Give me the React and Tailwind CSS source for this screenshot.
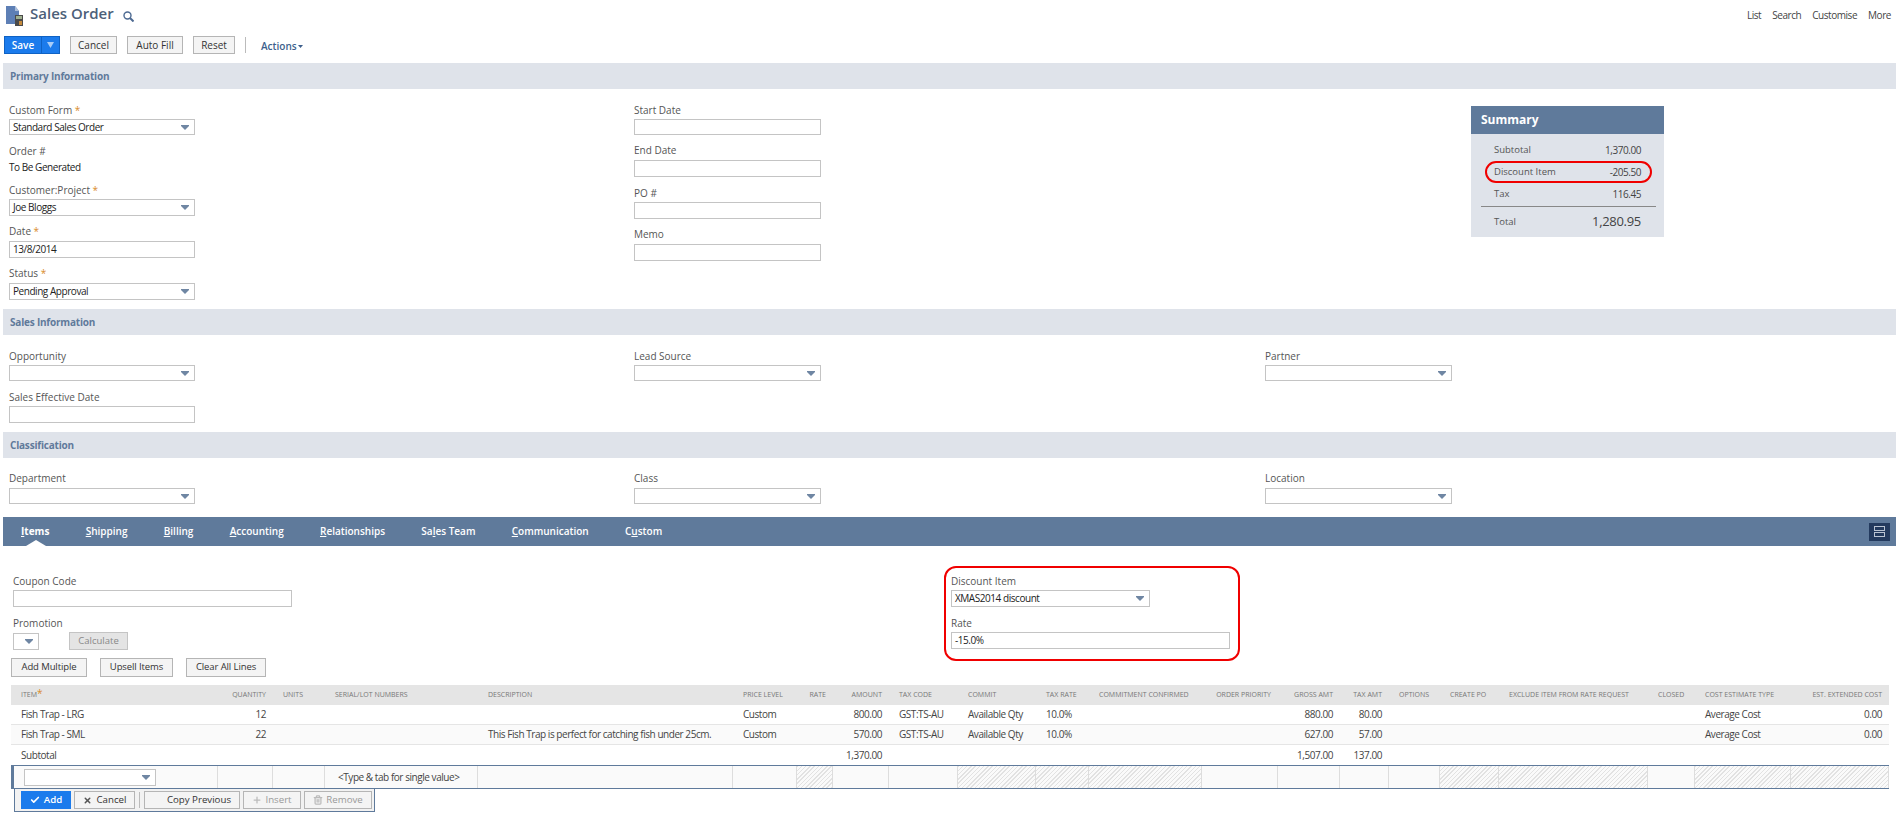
import { Check, X, Plus, Trash2 } from "lucide-react";

const gridCols =
  "grid grid-cols-[207px_55px_52px_153px_255px_64px_36px_56px_69px_78px_53px_113px_76px_62px_49px_51px_59px_149px_47px_96px_98px]";

const headers = [
  ["Item", "l"], ["Quantity", "r"], ["Units", "l"], ["Serial/Lot Numbers", "l"], ["Description", "l"],
  ["Price Level", "l"], ["Rate", "r"], ["Amount", "r"], ["Tax Code", "l"], ["Commit", "l"],
  ["Tax Rate", "l"], ["Commitment Confirmed", "l"], ["Order Priority", "r"], ["Gross Amt", "r"], ["Tax Amt", "r"],
  ["Options", "l"], ["Create PO", "l"], ["Exclude Item From Rate Request", "l"], ["Closed", "l"],
  ["Cost Estimate Type", "l"], ["Est. Extended Cost", "r"],
];

const rows = [
  {
    bg: "bg-white",
    cells: ["Fish Trap - LRG", "12", "", "", "", "Custom", "", "800.00", "GST:TS-AU", "Available Qty", "10.0%", "", "", "880.00", "80.00", "", "", "", "", "Average Cost", "0.00"],
  },
  {
    bg: "bg-[#fafafa]",
    cells: ["Fish Trap - SML", "22", "", "", "This Fish Trap is perfect for catching fish under 25cm.", "Custom", "", "570.00", "GST:TS-AU", "Available Qty", "10.0%", "", "", "627.00", "57.00", "", "", "", "", "Average Cost", "0.00"],
  },
  {
    bg: "bg-white",
    cells: ["Subtotal", "", "", "", "", "", "", "1,370.00", "", "", "", "", "", "1,507.00", "137.00", "", "", "", "", "", ""],
  },
];

const hatched = [6, 9, 10, 11, 16, 17, 19, 20];

function Arrow() {
  return (
    <svg width="8" height="5" viewBox="0 0 8 5" className="shrink-0">
      <path d="M0 0h8v1L4 5 0 1z" fill="#6f86a3" />
    </svg>
  );
}

function Label({ text, required }) {
  return (
    <div className="h-4 text-[10px] leading-4 text-[#555]">
      {text}
      {required && <span className="text-[#d98b2b]"> *</span>}
    </div>
  );
}

function Select({ value, className }) {
  return (
    <div className={`flex items-center justify-between border border-[#c4c4c4] bg-white pl-[3px] pr-[5px] text-[10px] tracking-[-0.45px] text-[#222] ${className}`}>
      <span>{value}</span>
      <Arrow />
    </div>
  );
}

function Input({ value, className }) {
  return (
    <div className={`flex items-center border border-[#c4c4c4] bg-white pl-[3px] text-[10px] tracking-[-0.45px] text-[#222] ${className}`}>
      {value}
    </div>
  );
}

function Section({ title }) {
  return (
    <div className="flex h-[26px] items-center bg-[#dfe3ea] pl-[7px] text-[10px] font-bold tracking-[-0.2px] text-[#5f7a9b]">
      {title}
    </div>
  );
}

function GrayButton({ children, className, disabled }) {
  return (
    <div className={`flex items-center justify-center border border-[#b5b5b5] bg-[#f4f4f4] ${disabled ? "text-[#999]" : "text-[#333]"} ${className}`}>
      {children}
    </div>
  );
}

function Tab({ pre, u, post, active }) {
  return (
    <div className={`relative flex h-full items-center text-[10px] text-white ${active ? "font-bold" : "font-semibold"}`}>
      <span>
        {pre}
        <span className="underline">{u}</span>
        {post}
      </span>
      {active && (
        <div className="absolute bottom-0 left-[5px] h-0 w-0 border-x-[10px] border-b-[6px] border-x-transparent border-b-white" />
      )}
    </div>
  );
}

function SummaryRow({ label, value }) {
  return (
    <div className="flex h-[22px] items-center justify-between px-[23px] text-[9.5px] text-[#555]">
      <span>{label}</span>
      <span className="text-[10px] tracking-[-0.45px] text-[#444]">{value}</span>
    </div>
  );
}

function Summary() {
  return (
    <div className="w-[193px] bg-[#dfe3ea]">
      <div className="flex h-[28px] items-center bg-[#5f7a9b] pl-[10px] text-[12px] font-bold text-white">Summary</div>
      <div className="pt-[5px]">
        <SummaryRow label="Subtotal" value="1,370.00" />
        <div className="relative">
          <SummaryRow label="Discount Item" value="-205.50" />
          <div className="absolute inset-y-0 left-[14px] right-[12px] rounded-full border-2 border-[#f00000]" />
        </div>
        <SummaryRow label="Tax" value="116.45" />
        <div className="ml-[10px] mr-[8px] mt-[1px] border-t border-[#888]" />
        <div className="flex h-[30px] items-center justify-between px-[23px] text-[9.5px] text-[#555]">
          <span>Total</span>
          <span className="text-[13px] tracking-[-0.3px] text-[#444]">1,280.95</span>
        </div>
      </div>
    </div>
  );
}

function DocIcon() {
  return (
    <svg width="18" height="20" viewBox="0 0 18 20">
      <path d="M0 0h9l4 5v13H0z" fill="#5d7fb5" />
      <path d="M9 0l4 5H9z" fill="#a9bcd8" />
      <rect x="9" y="9" width="8" height="11" fill="#4a4a4a" />
      <rect x="10" y="10" width="6" height="3" fill="#9fb08f" />
      <rect x="13" y="15" width="3" height="4" fill="#c58a3c" />
    </svg>
  );
}

function SearchIcon() {
  return (
    <svg width="11" height="11" viewBox="0 0 11 11" fill="none" stroke="#4d6a92" strokeWidth="1.4">
      <circle cx="4.5" cy="4.5" r="3.5" />
      <path d="M7 7l3.5 3.5" strokeWidth="2" />
    </svg>
  );
}

export default function App() {
  return (
    <div className="h-[814px] w-[1900px] overflow-hidden bg-white font-['Open_Sans',sans-serif] text-[10px]">
      {/* title */}
      <div className="flex h-[36px] items-start justify-between pl-[6px] pr-[9px] pt-[6px]">
        <div className="flex items-start">
          <DocIcon />
          <div className="ml-[6px] -mt-px text-[15px] font-semibold leading-[16px] text-[#4d5f79]">Sales Order</div>
          <div className="ml-[9px] mt-[5px]"><SearchIcon /></div>
        </div>
        <div className="flex gap-[11px] pt-[2px] text-[10px] tracking-[-0.45px] text-[#444]">
          <span>List</span>
          <span>Search</span>
          <span>Customise</span>
          <span>More</span>
        </div>
      </div>

      {/* buttons */}
      <div className="flex h-[27px] items-start pl-[4px]">
        <div className="flex h-[18px] w-[56px] border border-[#0f62c4] bg-[#1b7bec] font-semibold text-white">
          <div className="flex w-[37px] items-center justify-center border-r border-[#0f62c4]">Save</div>
          <div className="flex flex-1 items-center justify-center">
            <svg width="7" height="6" viewBox="0 0 7 6"><path d="M0 0h7L3.5 6z" fill="#a9cdf7" /></svg>
          </div>
        </div>
        <GrayButton className="ml-[10px] h-[18px] w-[47px]">Cancel</GrayButton>
        <GrayButton className="ml-[10px] h-[18px] w-[56px]">Auto Fill</GrayButton>
        <GrayButton className="ml-[10px] h-[18px] w-[42px]">Reset</GrayButton>
        <div className="ml-[10px] mt-[1px] h-[16px] w-px bg-[#bbb]" />
        <div className="ml-[15px] mt-[3px] flex items-center gap-[1px] font-semibold text-[#3d5f8c]">
          Actions
          <svg width="5" height="3" viewBox="0 0 5 3"><path d="M0 0h5L2.5 3z" fill="#3d5f8c" /></svg>
        </div>
      </div>

      <div className="pl-[3px] pr-[4px]">
        <Section title="Primary Information" />
        <div className="grid grid-cols-[625px_837px_193px] pl-[6px] text-[#222]">
          <div className="pt-[13px]">
            <Label text="Custom Form" required />
            <Select value="Standard Sales Order" className="mt-px h-4 w-[186px]" />
            <div className="mt-[8px]">
              <Label text="Order #" />
              <div className="h-4 text-[10px] leading-4 tracking-[-0.45px]">To Be Generated</div>
            </div>
            <div className="mt-[7px]">
              <Label text="Customer:Project" required />
              <Select value="Joe Bloggs" className="mt-px h-[17px] w-[186px]" />
            </div>
            <div className="mt-[7px]">
              <Label text="Date" required />
              <Input value="13/8/2014" className="mt-[2px] h-[17px] w-[186px]" />
            </div>
            <div className="mt-[7px]">
              <Label text="Status" required />
              <Select value="Pending Approval" className="mt-[2px] h-[17px] w-[186px]" />
            </div>
            <div className="h-[9px]" />
          </div>
          <div className="pt-[13px]">
            <Label text="Start Date" />
            <Input className="mt-px h-4 w-[187px]" />
            <div className="mt-[7px]">
              <Label text="End Date" />
              <Input className="mt-[2px] h-[17px] w-[187px]" />
            </div>
            <div className="mt-[8px]">
              <Label text="PO #" />
              <Input className="mt-px h-[17px] w-[187px]" />
            </div>
            <div className="mt-[7px]">
              <Label text="Memo" />
              <Input className="mt-[2px] h-[17px] w-[187px]" />
            </div>
          </div>
          <div className="pt-[17px]">
            <Summary />
          </div>
        </div>

        <Section title="Sales Information" />
        <div className="grid grid-cols-[625px_631px_1fr] pl-[6px] pt-[13px]">
          <div>
            <Label text="Opportunity" />
            <Select className="mt-px h-4 w-[186px]" />
            <div className="mt-[8px]">
              <Label text="Sales Effective Date" />
              <Input className="mt-px h-[17px] w-[186px]" />
            </div>
            <div className="h-[9px]" />
          </div>
          <div>
            <Label text="Lead Source" />
            <Select className="mt-px h-4 w-[187px]" />
          </div>
          <div>
            <Label text="Partner" />
            <Select className="mt-px h-4 w-[187px]" />
          </div>
        </div>

        <Section title="Classification" />
        <div className="grid grid-cols-[625px_631px_1fr] pl-[6px] pt-[12px]">
          <div>
            <Label text="Department" />
            <Select className="mt-[2px] h-4 w-[186px]" />
            <div className="h-[13px]" />
          </div>
          <div>
            <Label text="Class" />
            <Select className="mt-[2px] h-4 w-[187px]" />
          </div>
          <div>
            <Label text="Location" />
            <Select className="mt-[2px] h-4 w-[187px]" />
          </div>
        </div>

        {/* tabs */}
        <div className="flex h-[29px] items-center justify-between bg-[#5f7a9b] pl-[18px] pr-[6px]">
          <div className="flex h-full gap-[36.3px]">
            <Tab pre="" u="I" post="tems" active />
            <Tab pre="" u="S" post="hipping" />
            <Tab pre="" u="B" post="illing" />
            <Tab pre="" u="A" post="ccounting" />
            <Tab pre="" u="R" post="elationships" />
            <Tab pre="Sa" u="l" post="es Team" />
            <Tab pre="" u="C" post="ommunication" />
            <Tab pre="C" u="u" post="stom" />
          </div>
          <div className="flex h-[18px] w-[21px] flex-col items-center justify-center gap-[1px] bg-[#233a5e]">
            <div className="h-[5px] w-[11px] border border-[#b9c3d2]" />
            <div className="h-[5px] w-[11px] border border-[#b9c3d2]" />
          </div>
        </div>

        {/* coupon + discount */}
        <div className="flex h-[112px] items-start pl-[10px] pt-[20px]">
          <div className="w-[931px] pt-[7px]">
            <Label text="Coupon Code" />
            <Input className="mt-px h-[17px] w-[279px]" />
            <div className="mt-[8px]">
              <Label text="Promotion" />
              <div className="mt-px flex items-center">
                <Select className="h-[17px] w-[26px]" />
                <div className="ml-[30px] flex h-[18px] w-[59px] items-center justify-center border border-[#c4c4c4] bg-[#e4e4e4] text-[9.5px] text-[#888]">
                  Calculate
                </div>
              </div>
            </div>
          </div>
          <div className="h-[95px] w-[296px] rounded-[12px] border-2 border-[#f00000] pl-[5px] pt-[5px]">
            <Label text="Discount Item" />
            <Select value="XMAS2014 discount" className="mt-px h-[17px] w-[199px]" />
            <div className="mt-[8px]">
              <Label text="Rate" />
              <Input value="-15.0%" className="mt-px h-[17px] w-[279px]" />
            </div>
          </div>
        </div>
      </div>

      <div className="flex h-[27px] gap-[13px] pl-[11px] text-[9.5px] tracking-[-0.1px]">
        <GrayButton className="h-[19px] w-[76px]">Add Multiple</GrayButton>
        <GrayButton className="h-[19px] w-[73px]">Upsell Items</GrayButton>
        <GrayButton className="h-[19px] w-[80px]">Clear All Lines</GrayButton>
      </div>

      {/* items table */}
      <div className="ml-[11px] w-[1878px] text-[10px] tracking-[-0.45px]">
        <div className={`${gridCols} h-[20px] items-center bg-[#e5e5e5] text-[7px] uppercase tracking-normal text-[#777]`}>
          {headers.map(([name, align]) => (
            <div key={name} className={align === "r" ? "whitespace-nowrap pr-[7px] text-right" : "whitespace-nowrap pl-[10px]"}>
              {name}
              {name === "Item" && <span className="text-[10px] leading-[7px] text-[#d98b2b]">*</span>}
            </div>
          ))}
        </div>
        {rows.map((row, r) => (
          <div key={r} className={`${gridCols} h-[20px] items-center ${row.bg} ${r < 2 ? "border-b border-[#e5e5e5]" : ""} text-[#444]`}>
            {row.cells.map((cell, c) => (
              <div key={c} className={headers[c][1] === "r" ? "whitespace-nowrap pr-[7px] text-right" : "whitespace-nowrap pl-[10px]"}>
                {cell}
              </div>
            ))}
          </div>
        ))}
        <div className={`${gridCols} h-[24px] border-y border-[#5f7a9b] bg-[#fafafa] text-[#444]`}>
          {headers.map(([name], c) => (
            <div
              key={name}
              className={`flex items-center border-r border-[#ddd] ${c === 0 ? "border-l-[3px] border-l-[#5f7a9b]" : ""} ${
                hatched.includes(c)
                  ? "bg-[repeating-linear-gradient(135deg,#e2e2e2_0,#e2e2e2_1px,#fafafa_1px,#fafafa_3px)]"
                  : ""
              }`}
            >
              {c === 0 && <Select className="ml-[10px] h-[17px] w-[132px]" />}
              {c === 3 && <span className="whitespace-nowrap pl-[13px]">&lt;Type &amp; tab for single value&gt;</span>}
            </div>
          ))}
        </div>
      </div>

      {/* line toolbar */}
      <div className="ml-[14px] flex h-[23px] w-[361px] items-center gap-[3px] border border-t-0 border-[#5f7a9b] bg-[#f2f2f2] pl-[6px] text-[9.7px]">
        <div className="flex h-[18px] w-[50px] items-center justify-center gap-[4px] bg-[#1b7bec] font-semibold text-white">
          <Check size={10} strokeWidth={4} />
          Add
        </div>
        <GrayButton className="h-[18px] w-[61px] gap-[5px]">
          <X size={9} strokeWidth={4} className="text-[#555]" />
          Cancel
        </GrayButton>
        <div className="mx-[1px] h-[16px] w-px bg-[#bbb]" />
        <GrayButton className="h-[18px] w-[96px] justify-end pr-[8px]">Copy Previous</GrayButton>
        <GrayButton disabled className="h-[18px] w-[58px] gap-[3px]">
          <Plus size={10} strokeWidth={3} className="text-[#bbb]" />
          Insert
        </GrayButton>
        <GrayButton disabled className="h-[18px] w-[68px] gap-[3px]">
          <Trash2 size={10} strokeWidth={3} className="text-[#bbb]" />
          Remove
        </GrayButton>
      </div>
    </div>
  );
}
